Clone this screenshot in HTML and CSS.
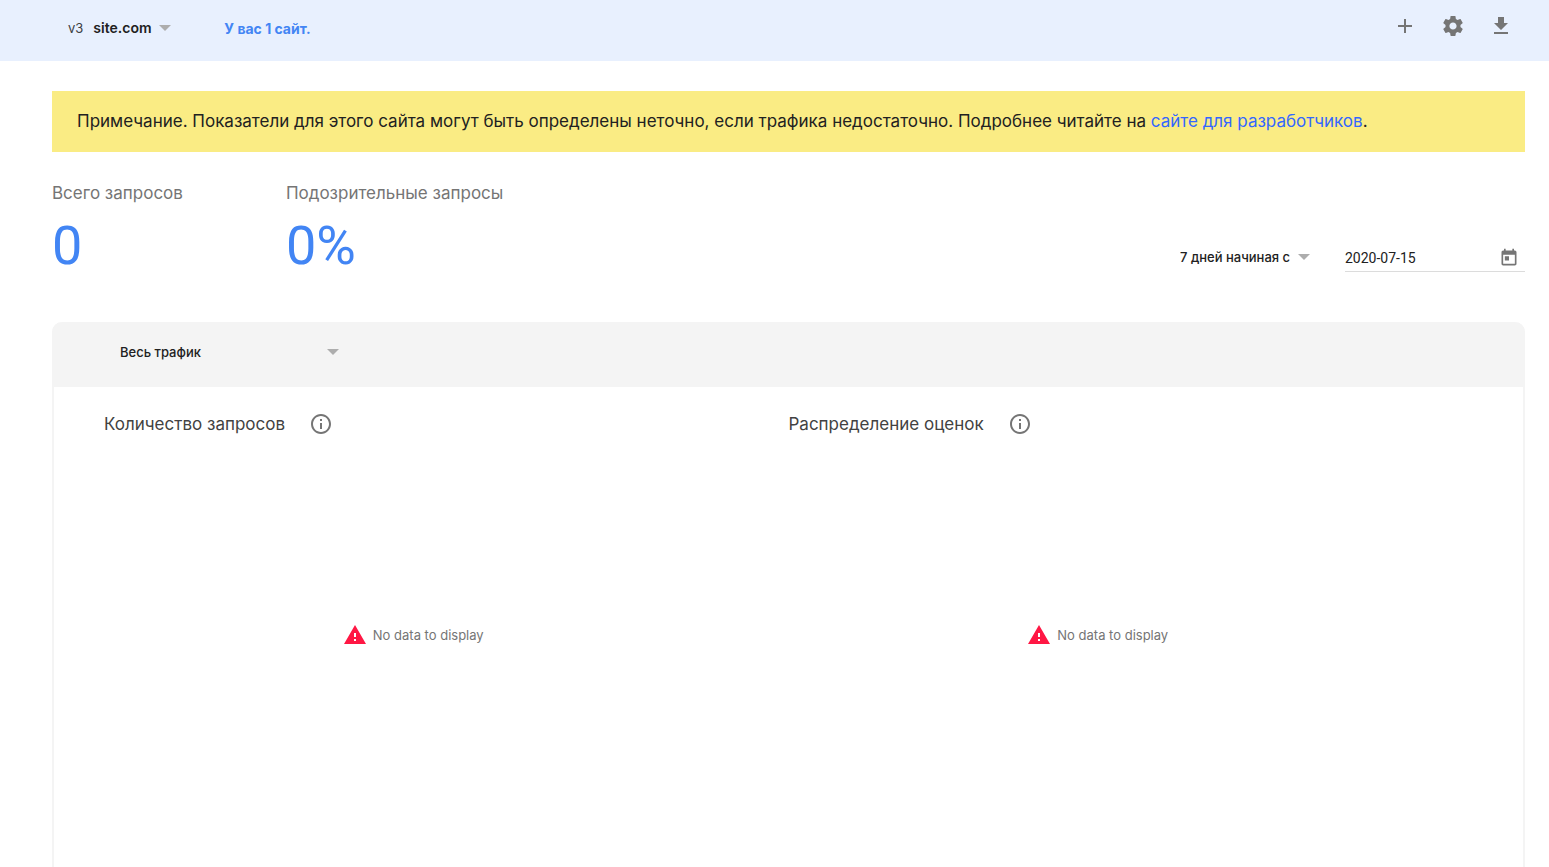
FILE: index.html
```html
<!DOCTYPE html>
<html lang="ru">
<head>
<meta charset="utf-8">
<title>site.com</title>
<link rel="stylesheet" href="styles.css">
</head>
<body>
<header class="topbar">
  <label class="site-picker">
    <span class="version">v3</span>
    <span class="select select-site"><select aria-label="Сайт"><option>site.com</option></select></span>
  </label>
  <a class="site-count" href="#">У вас 1 сайт.</a>
  <nav class="actions">
    <button class="icon-button" type="button" aria-label="Добавить"><svg viewBox="0 0 24 24"><path d="M19 13h-6v6h-2v-6H5v-2h6V5h2v6h6v2z"/></svg></button>
    <button class="icon-button" type="button" aria-label="Настройки"><svg viewBox="0 0 24 24"><path d="M19.43 12.98c.04-.32.07-.64.07-.98s-.03-.66-.07-.98l2.11-1.65c.19-.15.24-.42.12-.64l-2-3.46c-.12-.22-.39-.3-.61-.22l-2.49 1c-.52-.4-1.08-.73-1.69-.98l-.38-2.65C14.46 2.18 14.25 2 14 2h-4c-.25 0-.46.18-.49.42l-.38 2.65c-.61.25-1.17.59-1.69.98l-2.49-1c-.23-.09-.49 0-.61.22l-2 3.46c-.13.22-.07.49.12.64l2.11 1.65c-.04.32-.07.65-.07.98s.03.66.07.98l-2.11 1.65c-.19.15-.24.42-.12.64l2 3.46c.12.22.39.3.61.22l2.49-1c.52.4 1.08.73 1.69.98l.38 2.65c.03.24.24.42.49.42h4c.25 0 .46-.18.49-.42l.38-2.65c.61-.25 1.17-.59 1.69-.98l2.49 1c.23.09.49 0 .61-.22l2-3.46c.12-.22.07-.49-.12-.64l-2.11-1.65zM12 15.6c-1.98 0-3.6-1.62-3.6-3.6s1.62-3.6 3.6-3.6 3.6 1.62 3.6 3.6-1.62 3.6-3.6 3.6z"/></svg></button>
    <button class="icon-button" type="button" aria-label="Скачать"><svg viewBox="0 0 24 24"><path d="M19 9h-4V3H9v6H5l7 7 7-7zM5 18v2h14v-2H5z"/></svg></button>
  </nav>
</header>
<main class="content">
  <p class="notice">Примечание. Показатели для этого сайта могут быть определены неточно, если трафика недостаточно. Подробнее читайте на <a href="#">сайте для разработчиков</a>.</p>
  <section class="summary">
    <div class="stat">
      <h2 class="stat-label">Всего запросов</h2>
      <p class="stat-value">0</p>
    </div>
    <div class="stat">
      <h2 class="stat-label">Подозрительные запросы</h2>
      <p class="stat-value">0%</p>
    </div>
    <div class="period">
      <span class="select"><select aria-label="Период"><option>7 дней начиная с</option></select></span>
      <div class="date-field">
        <input type="text" value="2020-07-15" aria-label="Дата начала">
        <button class="date-button" type="button" aria-label="Открыть календарь"><svg viewBox="0 0 24 24"><path d="M19 3h-1V1h-2v2H8V1H6v2H5c-1.11 0-1.99.9-1.99 2L3 19c0 1.1.89 2 2 2h14c1.1 0 2-.9 2-2V5c0-1.100-.9-2-2-2zm0 16H5V8h14v11zM7 10h5v5H7z"/></svg></button>
      </div>
    </div>
  </section>
  <section class="card">
    <header class="card-header">
      <span class="select select-traffic"><select aria-label="Трафик"><option>Весь трафик</option></select></span>
    </header>
    <div class="charts">
      <article class="chart">
        <h3 class="chart-title">Количество запросов
          <button class="info" type="button" aria-label="Справка"><svg viewBox="0 0 24 24"><path d="M11 17h2v-6h-2v6zm1-15C6.480 2 2 6.480 2 12s4.480 10 10 10 10-4.480 10-10S17.520 2 12 2zm0 18c-4.410 0-8-3.590-8-8s3.590-8 8-8 8 3.590 8 8-3.590 8-8 8zM11 9h2V7h-2v2z"/></svg></button></h3>
        <p class="empty"><svg viewBox="0 0 24 24"><path d="M1 21h22L12 2 1 21zm12-3h-2v-2h2v2zm0-4h-2v-4h2v4z"/></svg>No data to display</p>
      </article>
      <article class="chart">
        <h3 class="chart-title">Распределение оценок
          <button class="info" type="button" aria-label="Справка"><svg viewBox="0 0 24 24"><path d="M11 17h2v-6h-2v6zm1-15C6.480 2 2 6.480 2 12s4.480 10 10 10 10-4.480 10-10S17.520 2 12 2zm0 18c-4.410 0-8-3.590-8-8s3.590-8 8-8 8 3.590 8 8-3.590 8-8 8zM11 9h2V7h-2v2z"/></svg></button></h3>
        <p class="empty"><svg viewBox="0 0 24 24"><path d="M1 21h22L12 2 1 21zm12-3h-2v-2h2v2zm0-4h-2v-4h2v4z"/></svg>No data to display</p>
      </article>
    </div>
  </section>
</main>
</body>
</html>
```
FILE: styles.css
```css
* { box-sizing: border-box; }
html, body { height: 100%; }
body {
  display: flex;
  flex-direction: column;
  margin: 0;
  overflow: hidden;
  background: #fff;
  color: #212121;
  font-family: Inter, Roboto, sans-serif;
  font-size: 14px;
}
h2, h3, p { margin: 0; font-weight: 400; }
a { text-decoration: none; }
svg { display: block; width: 24px; height: 24px; fill: #757575; }
button { padding: 0; border: 0; background: none; cursor: pointer; }

.select { display: inline-grid; align-items: center; }
.select select, .select::after { grid-area: 1 / 1; }
.select select {
  appearance: none;
  width: 100%;
  padding: 0 19px 0 0;
  border: 0;
  background: none;
  color: #212121;
  font: 500 13px/20px Inter, Roboto, sans-serif;
}
.select::after {
  content: "";
  justify-self: end;
  border: 6px solid transparent;
  border-top-color: #adadad;
  border-bottom: 0;
  pointer-events: none;
}

.topbar {
  display: flex;
  flex: none;
  align-items: center;
  padding: 0 36px 5px 68px;
  height: 61px;
  background: #e8f0fe;
}
.site-picker { display: flex; align-items: center; gap: 10px; }
.version { font-size: 13px; color: #3c4043; }
.select-site select { font-size: 14px; font-weight: 600; }
.site-count { margin-left: 53px; color: #4285f4; font-size: 14px; font-weight: 700; }
.actions { display: flex; gap: 24px; margin-left: auto; padding-bottom: 4px; }

.content {
  display: flex;
  flex: 1;
  flex-direction: column;
  padding: 30px 24px 0 52px;
}
.notice { padding: 18px 25px 19px; background: #faec84; font-size: 17px; line-height: 24px; }
.notice a { color: #3367ff; }

.summary { display: flex; padding: 29px 0 46px; }
.stat { margin-right: 103px; }
.stat-label { color: #757575; font-size: 17px; line-height: 24px; }
.stat-value { color: #4285f4; font: 400 54px/60px Roboto, sans-serif; padding-top: 11px; }
.period { display: flex; align-items: flex-end; gap: 35px; margin-left: auto; padding-bottom: 4px; }
.period .select { padding-bottom: 5px; }
.date-field {
  display: flex;
  align-items: center;
  width: 180px;
  padding: 0 6px 3px 0;
  border-bottom: 1px solid #dcdcdc;
}
.date-field input {
  flex: 1;
  min-width: 0;
  padding: 0;
  border: 0;
  color: #212121;
  font: 400 14px/20px Roboto, sans-serif;
}
.date-button svg { width: 20px; height: 20px; }

.card {
  display: flex;
  flex: 1;
  flex-direction: column;
  border: 2px solid #f4f4f4;
  border-width: 0 2px;
  border-radius: 10px 10px 0 0;
}
.card-header { margin: 0 -2px; padding: 20px 68px 25px; border-radius: 10px 10px 0 0; background: #f4f4f4; }
.select-traffic { width: 219px; }
.charts { display: grid; flex: 1; grid-template-columns: 1fr 1fr; padding: 24px 50px 0; }
.chart { padding-right: 66px; }
.chart-title { display: flex; align-items: center; gap: 24px; color: #424242; font-size: 17px; line-height: 24px; }
.info { padding-top: 1px; }
.empty { display: flex; justify-content: center; align-items: center; gap: 6px; padding-top: 187px; color: #757575; font-size: 13px; line-height: 24px; }
.empty svg { fill: #ff1744; }
```
